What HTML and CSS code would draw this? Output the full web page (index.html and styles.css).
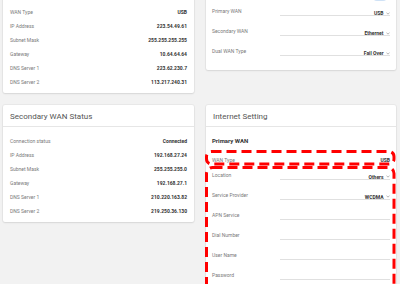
FILE: index.html
```html
<!DOCTYPE html>
<html lang="en">
<head>
<meta charset="utf-8">
<title>WAN</title>
<link rel="stylesheet" href="styles.css">
</head>
<body>
<main class="grid">
  <section class="card">
    <div class="card-head">Primary WAN Status</div>
    <div class="kv-body">
      <div class="kv"><span class="k">Connection status</span><span class="v">Connected</span></div>
      <div class="kv"><span class="k">WAN Type</span><span class="v">USB</span></div>
      <div class="kv"><span class="k">IP Address</span><span class="v">223.54.49.61</span></div>
      <div class="kv"><span class="k">Subnet Mask</span><span class="v">255.255.255.255</span></div>
      <div class="kv"><span class="k">Gateway</span><span class="v">10.64.64.64</span></div>
      <div class="kv"><span class="k">DNS Server 1</span><span class="v">223.62.230.7</span></div>
      <div class="kv"><span class="k">DNS Server 2</span><span class="v">113.217.240.31</span></div>
    </div>
  </section>

  <section class="card">
    <div class="card-head">WAN Setting</div>
    <div class="form-body">
      <div class="frow">
        <span class="flabel">Dual WAN</span>
        <span class="switch"></span>
      </div>
      <div class="frow">
        <span class="flabel">Primary WAN</span>
        <span class="field"><span class="fval">USB</span><svg class="caret" viewBox="0 0 4 3"><polyline points="0.5,0.6 2,2.2 3.5,0.6"/></svg></span>
      </div>
      <div class="frow">
        <span class="flabel">Secondary WAN</span>
        <span class="field"><span class="fval">Ethernet</span><svg class="caret" viewBox="0 0 4 3"><polyline points="0.5,0.6 2,2.2 3.5,0.6"/></svg></span>
      </div>
      <div class="frow">
        <span class="flabel">Dual WAN Type</span>
        <span class="field"><span class="fval">Fail Over</span><svg class="caret" viewBox="0 0 4 3"><polyline points="0.5,0.6 2,2.2 3.5,0.6"/></svg></span>
      </div>
    </div>
  </section>

  <section class="card">
    <div class="card-head">Secondary WAN Status</div>
    <div class="kv-body">
      <div class="kv"><span class="k">Connection status</span><span class="v">Connected</span></div>
      <div class="kv"><span class="k">IP Address</span><span class="v">192.168.27.24</span></div>
      <div class="kv"><span class="k">Subnet Mask</span><span class="v">255.255.255.0</span></div>
      <div class="kv"><span class="k">Gateway</span><span class="v">192.168.27.1</span></div>
      <div class="kv"><span class="k">DNS Server 1</span><span class="v">210.220.163.82</span></div>
      <div class="kv"><span class="k">DNS Server 2</span><span class="v">219.250.36.130</span></div>
    </div>
  </section>

  <section class="card anno-host">
    <div class="card-head">Internet Setting</div>
    <div class="form-body inet">
      <div class="subhead">Primary WAN</div>
      <div class="static-row"><span class="k">WAN Type</span><span class="v">USB</span></div>
      <div class="frow">
        <span class="flabel">Location</span>
        <span class="field"><span class="fval">Others</span><svg class="caret" viewBox="0 0 4 3"><polyline points="0.5,0.6 2,2.2 3.5,0.6"/></svg></span>
      </div>
      <div class="frow">
        <span class="flabel">Service Provider</span>
        <span class="field"><span class="fval">WCDMA</span><svg class="caret" viewBox="0 0 4 3"><polyline points="0.5,0.6 2,2.2 3.5,0.6"/></svg></span>
      </div>
      <div class="frow">
        <span class="flabel">APN Service</span>
        <span class="field"></span>
      </div>
      <div class="frow">
        <span class="flabel">Dial Number</span>
        <span class="field"></span>
      </div>
      <div class="frow">
        <span class="flabel">User Name</span>
        <span class="field"></span>
      </div>
      <div class="frow">
        <span class="flabel">Password</span>
        <span class="field"></span>
      </div>
      <div class="frow">
        <span class="flabel">Auth Type</span>
        <span class="field"></span>
      </div>
    </div>
    <svg class="anno anno1" viewBox="0 0 190.5 15.5"><rect x="1.5" y="1.5" width="187.5" height="12.5" rx="5" ry="5"/></svg>
    <svg class="anno anno2" viewBox="0 0 190.5 250"><rect x="1.5" y="1.5" width="187.5" height="247" rx="6" ry="6"/></svg>
  </section>
</main>
</body>
</html>
```

FILE: styles.css
```css
* { box-sizing: border-box; }

html, body {
  margin: 0;
  background: #f2f2f2;
  font-family: Roboto, "Liberation Sans", sans-serif;
}

body { overflow: hidden; height: 284px; }

.grid {
  display: grid;
  grid-template-columns: 191px 190px;
  column-gap: 12px;
  row-gap: 11.5px;
  align-items: start;
  padding-left: 3px;
  margin-top: -38px;
}

.card {
  background: #fff;
  border-radius: 2px;
  box-shadow: 0 0 0 1px rgba(0, 0, 0, 0.035), 0 1px 2px rgba(0, 0, 0, 0.08);
}

.card-head {
  height: 22px;
  padding: 2px 7px 0;
  border-bottom: 1px solid #e6e6e6;
  font-size: 8px;
  line-height: 19px;
  color: #555;
}

.kv-body { padding: 7px 7px 4px; }

.kv, .static-row {
  display: flex;
  justify-content: space-between;
  font-size: 5px;
}

.kv { height: 14px; line-height: 14px; }

.k { color: #7a7a7a; }
.v { color: #333; font-weight: 700; }

.form-body { padding: 0 6px 6px; }

.frow {
  display: flex;
  height: 20px;
  font-size: 5px;
}

.flabel {
  width: 68px;
  flex: none;
  color: #7a7a7a;
  line-height: 6px;
  padding-top: 4px;
}

.field {
  flex: 1;
  height: 12px;
  border-bottom: 1px solid #e0e0e0;
  display: flex;
  justify-content: flex-end;
  align-items: flex-end;
  gap: 2.5px;
}

.fval {
  color: #333;
  font-weight: 700;
  line-height: 4px;
}

.caret {
  width: 4px;
  height: 3px;
  margin-bottom: 0.5px;
  fill: none;
  stroke: #9a9a9a;
  stroke-width: 0.7;
}

.switch {
  margin-left: auto;
  margin-right: 3px;
  margin-top: 9px;
  width: 14px;
  height: 8px;
  border-radius: 4px;
  background: #cfe2f6;
}

.inet { padding-top: 10px; }

.subhead {
  height: 8px;
  line-height: 8px;
  font-size: 6px;
  font-weight: 700;
  color: #333;
}

.static-row {
  padding-top: 11.7px;
  padding-bottom: 3.5px;
  line-height: 8px;
}

.anno-host { position: relative; }

.anno {
  position: absolute;
  left: -1px;
  width: 190.5px;
  fill: none;
  stroke: #f00;
  stroke-width: 3;
  stroke-dasharray: 10 5;
  overflow: visible;
}

.anno1 { top: 45.5px; height: 15.5px; }
.anno2 { top: 61px; height: 250px; }
```
